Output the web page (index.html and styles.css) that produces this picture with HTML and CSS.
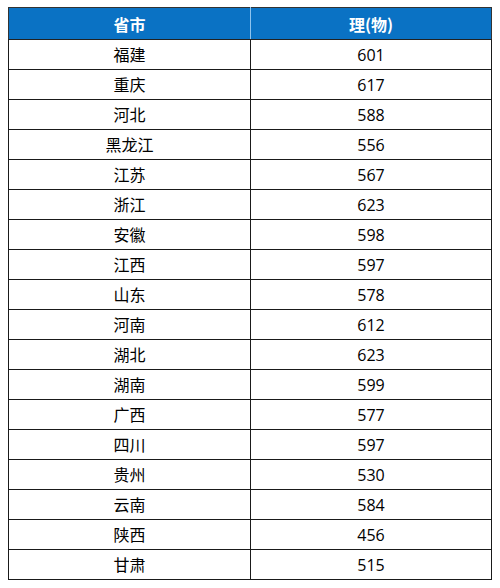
FILE: index.html
```html
<!DOCTYPE html>
<html lang="zh-CN">
<head>
<meta charset="utf-8">
<link rel="stylesheet" href="styles.css">
</head>
<body>
<table class="score-table">
  <thead>
    <tr><th class="col-prov">省市</th><th class="col-score">理(物)</th></tr>
  </thead>
  <tbody>
    <tr><td>福建</td><td>601</td></tr>
    <tr><td>重庆</td><td>617</td></tr>
    <tr><td>河北</td><td>588</td></tr>
    <tr><td>黑龙江</td><td>556</td></tr>
    <tr><td>江苏</td><td>567</td></tr>
    <tr><td>浙江</td><td>623</td></tr>
    <tr><td>安徽</td><td>598</td></tr>
    <tr><td>江西</td><td>597</td></tr>
    <tr><td>山东</td><td>578</td></tr>
    <tr><td>河南</td><td>612</td></tr>
    <tr><td>湖北</td><td>623</td></tr>
    <tr><td>湖南</td><td>599</td></tr>
    <tr><td>广西</td><td>577</td></tr>
    <tr><td>四川</td><td>597</td></tr>
    <tr><td>贵州</td><td>530</td></tr>
    <tr><td>云南</td><td>584</td></tr>
    <tr><td>陕西</td><td>456</td></tr>
    <tr><td>甘肃</td><td>515</td></tr>
  </tbody>
</table>
</body>
</html>
```
FILE: styles.css
```css
html, body {
  margin: 0;
  padding: 0;
  background: #ffffff;
}
body {
  padding: 7px 8px 0 8px;
  font-family: "Open Sans", "Noto Sans CJK SC", sans-serif;
  color: #000000;
}
.score-table {
  width: 484px;
  border-collapse: collapse;
  table-layout: fixed;
}
.col-prov { width: 241px; }
.score-table th {
  height: 31px;
  padding: 0;
  background: #0a72c4;
  color: #ffffff;
  font-family: "Noto Sans CJK SC", sans-serif;
  font-weight: 700;
  font-size: 16px;
  text-align: center;
  border-top: 1px solid #333333;
  border-left: 1px solid #333333;
  border-right: 1px solid #333333;
  border-bottom: 1px solid #222222;
}
.score-table th.col-prov { border-right: 1px solid #8fc4ee; }
.score-table th.col-score { border-left: 1px solid #8fc4ee; }
.score-table td {
  height: 29px;
  padding: 0;
  border: 1px solid #1a1a1a;
  text-align: center;
  font-size: 16px;
  font-family: "Open Sans", "Noto Sans CJK SC", sans-serif;
  line-height: 1;
}
```
